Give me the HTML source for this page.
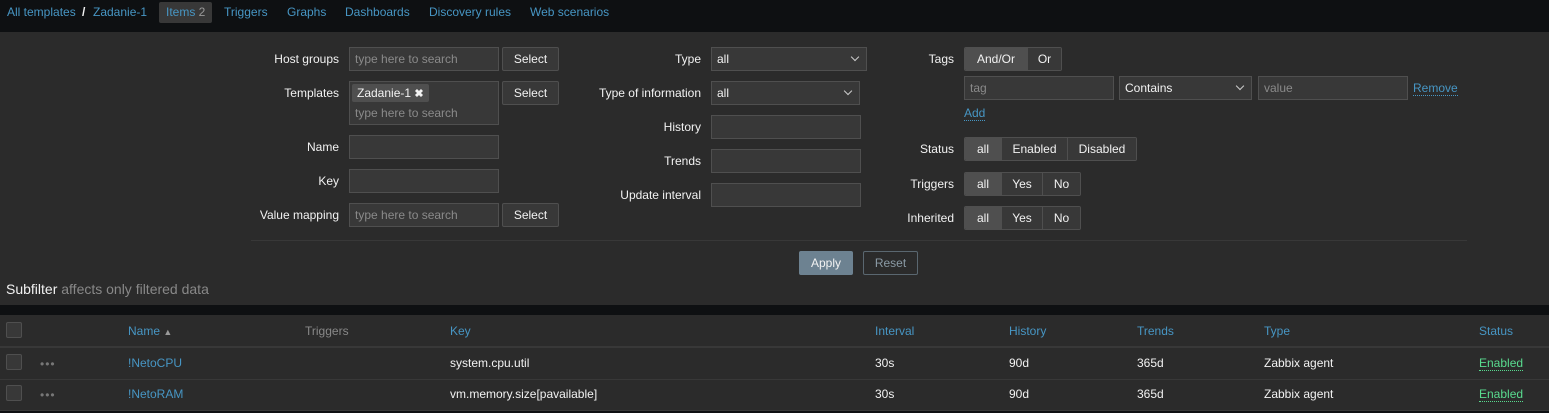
<!DOCTYPE html>
<html><head><meta charset="utf-8"><style>
*{box-sizing:border-box;margin:0;padding:0}
body{width:1549px;height:413px;background:#0e1012;font-family:"Liberation Sans",sans-serif;font-size:12px;color:#f2f2f2;position:relative;overflow:hidden}
.a{position:absolute;white-space:nowrap}
.l{color:#4796c4}
.lab{position:absolute;text-align:right;white-space:nowrap;line-height:24px;height:24px}
.in{position:absolute;background:#383838;border:1px solid #4f4f4f;height:24px;line-height:22px;padding-left:5px;color:#8a8a8a}
.btn{position:absolute;background:#383838;border:1px solid #4f4f4f;height:24px;line-height:22px;text-align:center;color:#f2f2f2;border-radius:2px}
.sel{position:absolute;background:#383838;border:1px solid #4f4f4f;height:24px;line-height:22px;padding-left:5px;color:#f2f2f2}
.sel:after{content:"";position:absolute;right:8px;top:6px;width:5px;height:5px;border-right:1px solid #ccc;border-bottom:1px solid #ccc;transform:rotate(45deg)}
.seg{position:absolute;display:flex;height:24px;border:1px solid #4f4f4f;border-radius:2px;overflow:hidden}
.seg div{line-height:22px;text-align:center;background:#383838;border-left:1px solid #4f4f4f}
.seg div:first-child{border-left:none;background:#4f4f4f}
.dot{border-bottom:1px dotted}
.cb{position:absolute;left:6px;width:16px;height:16px;border:1px solid #4f4f4f;background:#383838;border-radius:2px}
.row{position:absolute;left:0;width:1549px;background:#2b2b2b;border-bottom:2px solid #383838}
</style></head><body>
<div class="a l" style="left:7px;top:5px">All templates</div>
<div class="a" style="left:82px;top:5px;font-weight:bold">/</div>
<div class="a l" style="left:93px;top:5px">Zadanie-1</div>
<div class="a" style="left:159px;top:2px;width:53px;height:21px;background:#383838;border-radius:2px;padding:3px 0 0 7px;color:#4796c4">Items <span style="color:#999">2</span></div>
<div class="a l" style="left:224px;top:5px">Triggers</div>
<div class="a l" style="left:287px;top:5px">Graphs</div>
<div class="a l" style="left:345px;top:5px">Dashboards</div>
<div class="a l" style="left:429px;top:5px">Discovery rules</div>
<div class="a l" style="left:530px;top:5px">Web scenarios</div>

<div class="a" style="left:0;top:32px;width:1549px;height:273px;background:#2b2b2b"></div>

<div class="lab" style="left:200px;width:139px;top:47px">Host groups</div>
<div class="in" style="left:349px;top:47px;width:150px">type here to search</div>
<div class="btn" style="left:502px;top:47px;width:57px">Select</div>
<div class="lab" style="left:200px;width:139px;top:81px">Templates</div>
<div class="in" style="left:349px;top:81px;width:150px;height:44px;line-height:normal;padding-top:2px;padding-left:2px">
<div style="display:inline-block;background:#4f4f4f;color:#f2f2f2;padding:2px 5px;height:18px;border-radius:2px">Zadanie-1 <b style="font-size:11px">✖</b></div>
<div style="padding:4px 0 0 3px">type here to search</div></div>
<div class="btn" style="left:502px;top:81px;width:57px">Select</div>
<div class="lab" style="left:200px;width:139px;top:135px">Name</div>
<div class="in" style="left:349px;top:135px;width:150px"></div>
<div class="lab" style="left:200px;width:139px;top:169px">Key</div>
<div class="in" style="left:349px;top:169px;width:150px"></div>
<div class="lab" style="left:200px;width:139px;top:203px">Value mapping</div>
<div class="in" style="left:349px;top:203px;width:150px">type here to search</div>
<div class="btn" style="left:502px;top:203px;width:57px">Select</div>

<div class="lab" style="left:560px;width:141px;top:47px">Type</div>
<div class="sel" style="left:711px;top:47px;width:156px">all</div>
<div class="lab" style="left:560px;width:141px;top:81px">Type of information</div>
<div class="sel" style="left:711px;top:81px;width:149px">all</div>
<div class="lab" style="left:560px;width:141px;top:115px">History</div>
<div class="in" style="left:711px;top:115px;width:150px"></div>
<div class="lab" style="left:560px;width:141px;top:149px">Trends</div>
<div class="in" style="left:711px;top:149px;width:150px"></div>
<div class="lab" style="left:560px;width:141px;top:183px">Update interval</div>
<div class="in" style="left:711px;top:183px;width:150px"></div>

<div class="lab" style="left:860px;width:94px;top:47px">Tags</div>
<div class="seg" style="left:964px;top:47px"><div style="width:62px">And/Or</div><div style="width:34px">Or</div></div>
<div class="in" style="left:964px;top:76px;width:150px">tag</div>
<div class="sel" style="left:1119px;top:76px;width:133px">Contains</div>
<div class="in" style="left:1258px;top:76px;width:150px">value</div>
<div class="a l dot" style="left:1413px;top:81px">Remove</div>
<div class="a l dot" style="left:964px;top:106px">Add</div>
<div class="lab" style="left:860px;width:94px;top:137px">Status</div>
<div class="seg" style="left:964px;top:137px"><div style="width:36px">all</div><div style="width:66px">Enabled</div><div style="width:69px">Disabled</div></div>
<div class="lab" style="left:860px;width:94px;top:172px">Triggers</div>
<div class="seg" style="left:964px;top:172px"><div style="width:36px">all</div><div style="width:41px">Yes</div><div style="width:38px">No</div></div>
<div class="lab" style="left:860px;width:94px;top:206px">Inherited</div>
<div class="seg" style="left:964px;top:206px"><div style="width:36px">all</div><div style="width:41px">Yes</div><div style="width:38px">No</div></div>

<div class="a" style="left:251px;top:240px;width:1216px;height:1px;background:#383838"></div>
<div class="btn" style="left:799px;top:251px;width:54px;background:#6d8291;border-color:#6d8291">Apply</div>
<div class="btn" style="left:863px;top:251px;width:55px;background:transparent;border-color:#5a6770;color:#8a9aa5">Reset</div>
<div class="a" style="left:6px;top:281px;font-size:14px">Subfilter <span style="color:#888">affects only filtered data</span></div>

<div class="row" style="top:315px;height:33px"></div>
<div class="cb" style="top:322px"></div>
<div class="a l" style="left:128px;top:324px">Name <span style="color:#999;font-size:9px">▲</span></div>
<div class="a" style="left:305px;top:324px;color:#888">Triggers</div>
<div class="a l" style="left:450px;top:324px">Key</div>
<div class="a l" style="left:875px;top:324px">Interval</div>
<div class="a l" style="left:1009px;top:324px">History</div>
<div class="a l" style="left:1137px;top:324px">Trends</div>
<div class="a l" style="left:1264px;top:324px">Type</div>
<div class="a l" style="left:1479px;top:324px">Status</div>

<div class="row" style="top:348px;height:32px;border-bottom-width:1px"></div>
<div class="cb" style="top:354px"></div>
<div class="a" style="left:40px;top:357px;color:#777;letter-spacing:1px">•••</div>
<div class="a l" style="left:128px;top:356px">!NetoCPU</div>
<div class="a" style="left:450px;top:356px">system.cpu.util</div>
<div class="a" style="left:875px;top:356px">30s</div>
<div class="a" style="left:1009px;top:356px">90d</div>
<div class="a" style="left:1137px;top:356px">365d</div>
<div class="a" style="left:1264px;top:356px">Zabbix agent</div>
<div class="a dot" style="left:1479px;top:356px;color:#59db8f">Enabled</div>

<div class="row" style="top:380px;height:31px;border-bottom-width:1px"></div>
<div class="cb" style="top:385px"></div>
<div class="a" style="left:40px;top:388px;color:#777;letter-spacing:1px">•••</div>
<div class="a l" style="left:128px;top:387px">!NetoRAM</div>
<div class="a" style="left:450px;top:387px">vm.memory.size[pavailable]</div>
<div class="a" style="left:875px;top:387px">30s</div>
<div class="a" style="left:1009px;top:387px">90d</div>
<div class="a" style="left:1137px;top:387px">365d</div>
<div class="a" style="left:1264px;top:387px">Zabbix agent</div>
<div class="a dot" style="left:1479px;top:387px;color:#59db8f">Enabled</div>
</body></html>
